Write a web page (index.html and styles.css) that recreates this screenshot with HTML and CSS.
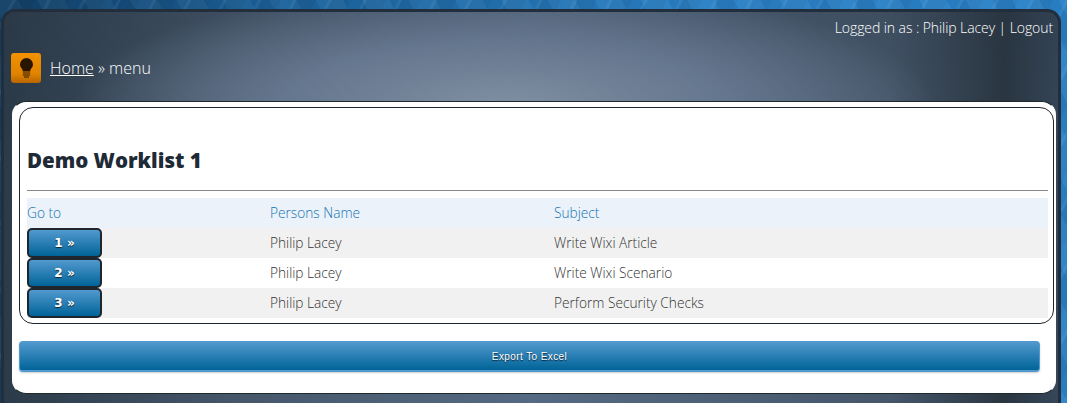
FILE: index.html
```html
<!DOCTYPE html>
<html lang="en">
<head>
<meta charset="utf-8">
<title>menu</title>
<link rel="stylesheet" href="styles.css">
</head>
<body>
<div class="shell">
  <div class="userbar">Logged in as : Philip Lacey | Logout</div>
  <div class="crumbs">
    <span class="badge">
      <svg width="13" height="20" viewBox="0 0 13 20"><path d="M6.500 0a6.500 6.500 0 0 0-6.500 6.500c0 2.700 1.800 3.800 2.700 5.500v1.500h7.600v-1.500c.9-1.700 2.700-2.800 2.700-5.500a6.500 6.500 0 0 0-6.500-6.500z" fill="#2a1500"/><path d="M2.800 15h7.400M2.800 17h7.400M4 19h5" stroke="#2f1800" stroke-width="1.200"/></svg>
    </span>
    <span class="path"><a class="home" href="#">Home</a> » menu</span>
  </div>
  <main class="card">
    <section class="inner">
      <h1 class="title">Demo Worklist 1</h1>
      <hr class="rule">
      <table class="list">
        <thead>
          <tr><th class="c1">Go to</th><th class="c2">Persons Name</th><th>Subject</th></tr>
        </thead>
        <tbody>
          <tr class="odd"><td><button class="go">1 »</button></td><td>Philip Lacey</td><td>Write Wixi Article</td></tr>
          <tr><td><button class="go">2 »</button></td><td>Philip Lacey</td><td>Write Wixi Scenario</td></tr>
          <tr class="odd"><td><button class="go">3 »</button></td><td>Philip Lacey</td><td>Perform Security Checks</td></tr>
        </tbody>
      </table>
    </section>
    <button class="export">Export To Excel</button>
  </main>
</div>
</body>
</html>
```
FILE: styles.css
```css
* { box-sizing: border-box; }
html, body { height: 100%; }
body {
  margin: 0;
  overflow: hidden;
  font-family: "Open Sans", "Liberation Sans", sans-serif;
  font-weight: 300;
  background:
    repeating-linear-gradient(118deg, rgba(255,255,255,0) 0 11px, rgba(255,255,255,.05) 11px 14px, rgba(0,0,0,.04) 14px 31px),
    repeating-linear-gradient(62deg, rgba(0,20,50,.05) 0 17px, rgba(255,255,255,.03) 17px 41px),
    linear-gradient(90deg, #123f66 0%, #1b6199 25%, #2a80c4 65%, #2a82c8 100%);
  padding: 9px 6px 0 1px;
}
.shell {
  height: 100%;
  border: 3px solid #222e3c;
  border-bottom: 0;
  border-radius: 14px 14px 0 0;
  background:
    repeating-linear-gradient(45deg, rgba(0,0,0,.015) 0 1px, rgba(255,255,255,0) 1px 3px),
    radial-gradient(ellipse 430px 120px at 500px 92px, #7f8fa3 0%, #66788f 50%, rgba(78,95,116,0) 100%),
    linear-gradient(180deg, rgba(40,52,66,.25) 0%, rgba(40,52,66,0) 40%),
    linear-gradient(90deg, #2c3b49 0%, #46576b 22%, #556a83 50%, #46576b 84%, #2a3641 95%, #36475a 100%);
  padding: 6px 2px 0 8px;
  color: #fff;
}
.userbar {
  font-size: 14px;
  line-height: 20px;
  letter-spacing: -.08px;
  text-align: right;
  padding-right: 3px;
}
.crumbs {
  display: flex;
  align-items: center;
  gap: 9px;
  margin-top: 15px;
  margin-left: -1px;
  height: 30px;
}
.badge {
  width: 30px;
  height: 30px;
  border-radius: 3px;
  background: linear-gradient(#f39200, #e08400 70%, #b86500);
  display: flex;
  align-items: center;
  justify-content: center;
}
.path { font-size: 16px; line-height: 26px; }
.home { color: #fff; }
.card {
  margin-top: 18px;
  height: 293px;
  background: #fff;
  border: 1px solid #1c2a2a;
  border-left-color: #fff;
  border-right-color: #fff;
  border-radius: 14px;
  padding: 5px 1px 0 6px;
}
.inner {
  height: 217px;
  border: 1px solid #20262e;
  border-radius: 14px;
  padding: 0 5px 5px 7px;
}
.title {
  margin: 0;
  padding-top: 38px;
  height: 82px;
  font-size: 20.500px;
  line-height: 28px;
  font-weight: 800;
  color: #1e2a35;
}
.rule {
  margin: 0 0 7px;
  border: 0;
  border-top: 1px solid #888;
}
.list {
  width: 100%;
  border-collapse: collapse;
  font-size: 13.700px;
  table-layout: fixed;
}
.list th, .list td {
  height: 30px;
  padding: 0;
  text-align: left;
  font-weight: 300;
}
.list th, .list td:not(:first-child) { padding-bottom: 2px; }
.list th { color: #1672b4; background: #ebf2f9; }
.list td { color: #333; }
.c1 { width: 243px; }
.c2 { width: 284px; }
.odd td { background: #f1f1f1; }
.go {
  display: block;
  width: 75px;
  height: 30px;
  padding: 0;
  border: 2px solid #20262e;
  border-radius: 5px;
  background: linear-gradient(#5299cf, #006498);
  color: #fff;
  font-family: "DejaVu Sans", sans-serif;
  font-size: 12px;
  font-weight: 700;
  text-shadow: 0 1px 1px #123;
}
.export {
  display: block;
  width: 1021px;
  height: 31px;
  margin-top: 17px;
  padding: 0;
  border: 1px solid #5299cf;
  border-bottom-width: 2px;
  border-radius: 4px;
  background: linear-gradient(#5299cf, #006498);
  color: #fff;
  font-family: "Liberation Sans", sans-serif;
  font-size: 10px;
  letter-spacing: .4px;
  text-shadow: 0 1px 1px #123;
  box-shadow: 0 1px 2px #ccc;
}
```
